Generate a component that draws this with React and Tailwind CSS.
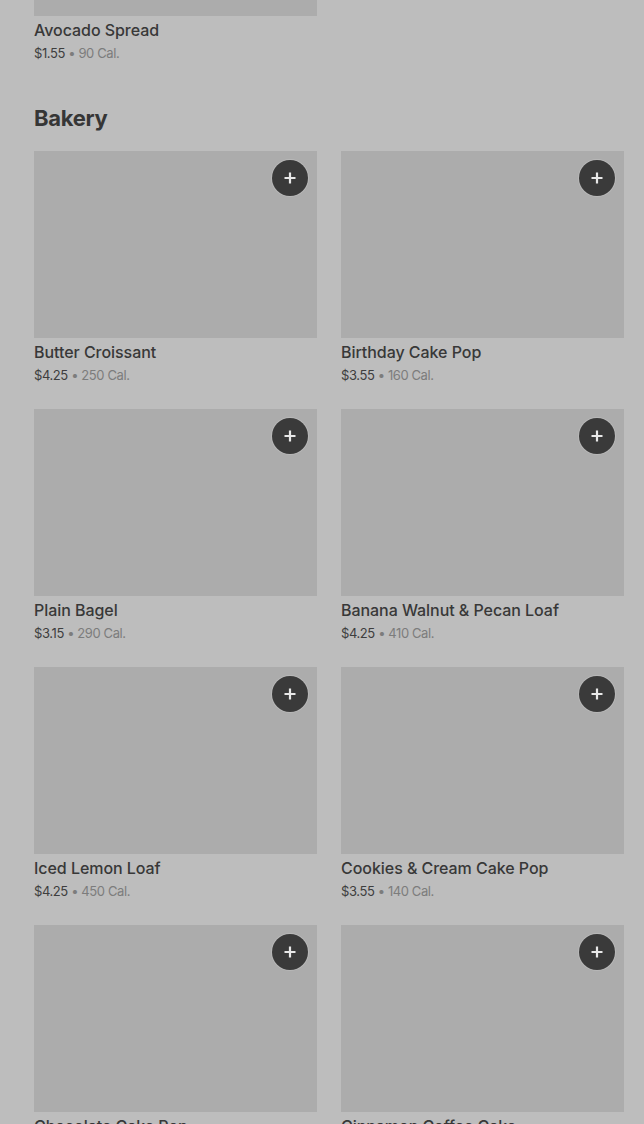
import React from "react";

const items = [
  ["Butter Croissant", "$4.25", "250 Cal."],
  ["Birthday Cake Pop", "$3.55", "160 Cal."],
  ["Plain Bagel", "$3.15", "290 Cal."],
  ["Banana Walnut & Pecan Loaf", "$4.25", "410 Cal."],
  ["Iced Lemon Loaf", "$4.25", "450 Cal."],
  ["Cookies & Cream Cake Pop", "$3.55", "140 Cal."],
  ["Chocolate Cake Pop", "$3.55", "160 Cal."],
  ["Cinnamon Coffee Cake", "$3.95", "380 Cal."],
];

function Plus() {
  return (
    <svg width="14" height="14" viewBox="0 0 14 14">
      <path d="M7 1.5v11M1.5 7h11" stroke="#e8e8e8" strokeWidth="2.2" />
    </svg>
  );
}

function Card({ name, price, cal, button = true }) {
  return (
    <div className="flex flex-col">
      <div className="relative h-[187px] bg-[#acacac]">
        {button && (
          <div className="absolute right-[9px] top-[9px] flex h-[36px] w-[36px] items-center justify-center rounded-full bg-[#3a3a3a] shadow-[0_0_0_1px_rgba(255,255,255,0.15)]">
            <Plus />
          </div>
        )}
      </div>
      <div className="mt-[4px] text-[16px] leading-[20px] font-medium text-[#383838] tracking-[-0.05px]">{name}</div>
      <div className="mt-[4px] text-[13px] leading-[18px] text-[#3e3e3e] tracking-[-0.4px]">
        {price}
        <span className="text-[#7c7c7c]"> • {cal}</span>
      </div>
    </div>
  );
}

export default function App() {
  return (
    <div
      className="h-[1124px] w-[644px] overflow-hidden bg-[#bdbdbd] pl-[34px] pr-[20px]"
      style={{ fontFamily: "Inter, 'Noto Sans', sans-serif" }}
    >
      <div className="-mt-[171px] grid grid-cols-2 gap-x-[24px]">
        <Card name="Avocado Spread" price="$1.55" cal="90 Cal." button={false} />
      </div>
      <h2 className="mt-[42px] text-[22px] leading-[28px] font-bold text-[#363636] tracking-[-0.3px]">Bakery</h2>
      <div className="mt-[19px] grid grid-cols-2 gap-x-[24px] gap-y-[25px]">
        {items.map(([n, p, c]) => (
          <Card key={n} name={n} price={p} cal={c} />
        ))}
      </div>
    </div>
  );
}
